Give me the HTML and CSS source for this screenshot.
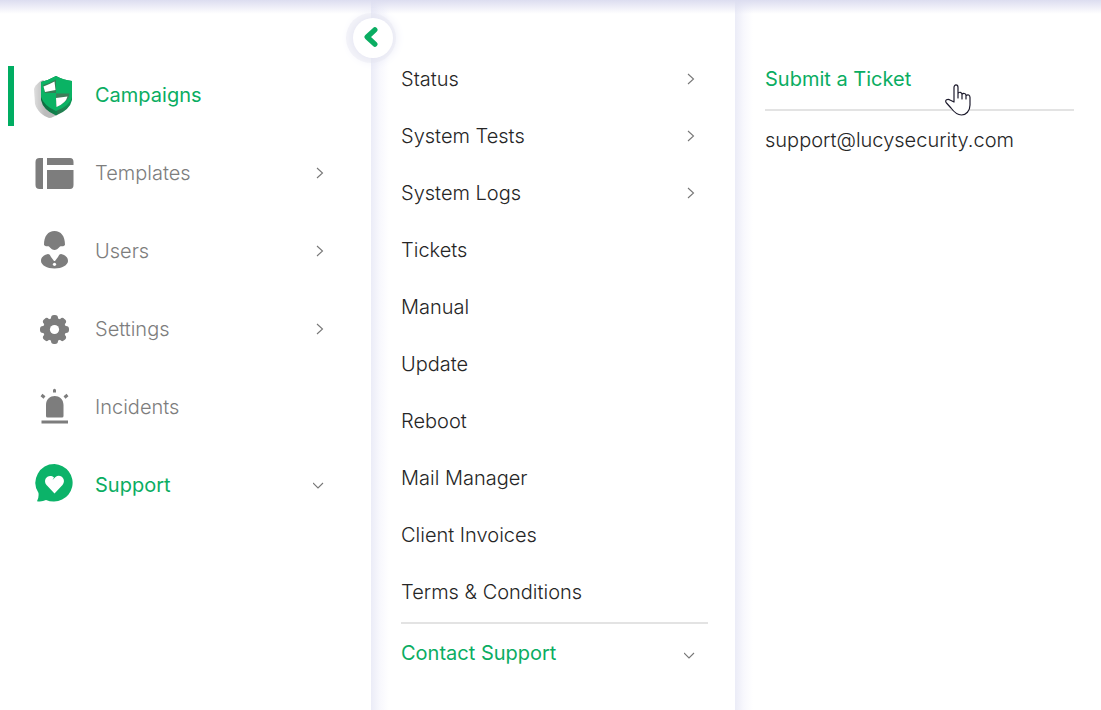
FILE: index.html
```html
<!DOCTYPE html>
<html lang="en">
<head>
<meta charset="utf-8">
<title>Support</title>
<link rel="stylesheet" href="styles.css">
</head>
<body>
<svg class="defs" aria-hidden="true">
  <symbol id="right" viewBox="0 0 12 12"><path d="M4 1 9.500 6 4 11" fill="none" stroke="#777" stroke-width="1.100"/></symbol>
  <symbol id="down" viewBox="0 0 12 12"><path d="M0 4 5 9 10 4" fill="none" stroke="#777" stroke-width="1.100"/></symbol>
</svg>
<main class="layout">
  <nav class="sidebar" aria-label="Main">
    <a class="main-item current" href="#">
      <svg class="icon" viewBox="0 -1 40 48">
        <defs>
          <linearGradient id="side" x1="0" x2="1"><stop offset="0" stop-color="#0d6c40"/><stop offset=".5" stop-color="#11824c"/><stop offset=".55" stop-color="#2c7750"/><stop offset="1" stop-color="#0a9653"/></linearGradient>
          <linearGradient id="shade" x1="0" x2="1"><stop offset="0" stop-color="#bdbdbd" stop-opacity=".5"/><stop offset=".4" stop-color="#bbb"/></linearGradient>
          <filter id="soft" x="-20%" y="-20%" width="140%" height="140%"><feGaussianBlur stdDeviation=".7"/></filter>
        </defs>
        <path d="M9 8 C4 10 1 14 0 17 L1 32 C3 39 9 44 15 46 Q19 46 27 40 L27 20Z" fill="url(#shade)" filter="url(#soft)"/>
        <path d="M22 4 Q29 8 38 9 V28 Q36 38 22 43.500 Q9 38 7 28 V10 Q15 8 22 4Z" fill="url(#side)"/>
        <path d="M22 4 Q29 8 38 9 V25 Q36 34 22 39 Q10 34 7 25 V10 Q15 8 22 4Z" fill="#0ab364"/>
        <path d="M9 13 Q16 11 22 7.500 V21 H11Z" fill="#347f55"/>
        <path d="M9.500 14.500 Q16 12 20.500 9.500 L21.500 18 L11 20Z" fill="#fff"/>
        <path d="M22 21.500 H35.500 Q35 30 22 35Z" fill="#3e7d59"/>
        <path d="M22 26 L33.500 24.500 Q32 31 22.500 35Z" fill="#fff"/>
      </svg>
      <span class="label">Campaigns</span>
    </a>
    <a class="main-item" href="#">
      <svg class="icon" viewBox="0 -1 40 48" fill="#7d7d7d"><path d="M5.500 8H9V39H5.500Q1.500 39 1.500 35V12Q1.500 8 5.500 8ZM13 8H36Q39.500 8 39.500 12V15H13ZM13 20H39.500V35Q39.500 39 36 39H13Z"/></svg>
      <span class="label">Templates</span><svg class="chevron"><use href="#right"/></svg>
    </a>
    <a class="main-item" href="#">
      <svg class="icon" viewBox="0 0 40 48" fill="#7d7d7d"><path d="M20.500 4C14 4 10 9 10 18C12 20 14 19 15 19.500C17 22 19 23 20.500 23S24 22 26 19.500C28 19 29 20 31 18C31 9 27 4 20.500 4Z"/><path d="M14 27C10 28 7 30 7 34C7 38 13 41.500 20.500 41.500S34 38 34 34C34 30 31 28 27 27Q25 27 24 30L21 34H20L17 30Q16 27 14 27Z"/><circle cx="20.500" cy="37.300" r="1.600" fill="#fff"/></svg>
      <span class="label">Users</span><svg class="chevron"><use href="#right"/></svg>
    </a>
    <a class="main-item" href="#">
      <svg class="icon" viewBox="0 -1 40 48">
        <g fill="#7d7d7d"><circle cx="20.500" cy="23.500" r="11.500"/><g id="teeth"><rect x="17" y="9" width="7" height="29" rx="3"/><rect x="6" y="20" width="29" height="7" rx="3"/></g><use href="#teeth" transform="rotate(45 20.500 23.500)"/></g><circle cx="20.500" cy="23.500" r="4.600" fill="#fff"/>
      </svg>
      <span class="label">Settings</span><svg class="chevron"><use href="#right"/></svg>
    </a>
    <a class="main-item" href="#">
      <svg class="icon" viewBox="0 1 40 48" fill="#7d7d7d"><path d="M12 34V23C12 11 29.500 11 29.500 23V34Q29.500 35.500 28 35.500H13.500Q12 35.500 12 34ZM7.500 38.500H34V41.500H7.500ZM19 10V8Q20.500 5.500 22 8V10.500H19Z"/><path d="M7.500 13 10.500 15.500M33.500 13 30.500 15.500" stroke="#7d7d7d" stroke-width="3"/></svg>
      <span class="label">Incidents</span>
    </a>
    <a class="main-item active" href="#">
      <svg class="icon" viewBox="0 1 40 48"><path d="M20.500 4A19 18.800 0 1 1 12 40Q8 42 3 41.200Q5 38 4.500 33A19 18.800 0 0 1 20.500 4Z" fill="#0cb369"/><path d="M20.500 33.500 12.500 25C8 19 15 13 20 17.500L18.500 20L21.500 17C26 13 33 19 28.500 25Z" fill="#fff"/></svg>
      <span class="label">Support</span><svg class="chevron"><use href="#down"/></svg>
    </a>
  </nav>
  <nav class="panel" aria-label="Support">
    <button class="collapse" type="button" aria-label="Collapse"><svg class="collapse-icon" viewBox="0 0 16 20"><path d="M11.500 3.500 4.500 10 11.500 16.500" fill="none" stroke="#0aad62" stroke-width="4.800" stroke-linecap="round" stroke-linejoin="round"/></svg></button>
    <a class="item" href="#">Status<svg class="chevron"><use href="#right"/></svg></a>
    <a class="item" href="#">System Tests<svg class="chevron"><use href="#right"/></svg></a>
    <a class="item" href="#">System Logs<svg class="chevron"><use href="#right"/></svg></a>
    <a class="item" href="#">Tickets</a>
    <a class="item" href="#">Manual</a>
    <a class="item" href="#">Update</a>
    <a class="item" href="#">Reboot</a>
    <a class="item" href="#">Mail Manager</a>
    <a class="item" href="#">Client Invoices</a>
    <a class="item" href="#">Terms &amp; Conditions</a>
    <a class="item contact" href="#">Contact Support<svg class="chevron"><use href="#down"/></svg></a>
  </nav>
  <nav class="panel" aria-label="Contact Support">
    <a class="item ticket" href="#">Submit a Ticket</a>
    <a class="item email" href="#">support@lucysecurity.com</a>
    <svg class="pointer" viewBox="0 0 26 34" aria-hidden="true"><path d="M9 19V4.500C9 1 13 1 13 4.500V15V10.500C14 8.500 17 9 17 11.500V16V11.500C18 10 21 10 21 12.500V16V12.500C23 11 25 12 25 14.500V22C25 28 21 32 16.500 32C12 32 9 29 6 25L1.500 20C-1 17 3 15.500 5 17Z" fill="#fff" stroke="#1c1a2c" stroke-width="1.200" stroke-linejoin="round"/></svg>
  </nav>
</main>
</body>
</html>
```
FILE: styles.css
```css
* { box-sizing: border-box; }
body {
  margin: 0;
  background: #fff;
  color: #262626;
  font: 300 20px/28px Inter, "Liberation Sans", sans-serif;
}
.defs { position: absolute; width: 0; height: 0; }
.layout {
  display: grid;
  grid-template-columns: 371fr 364fr 366fr;
  min-height: 100vh;
}
a { color: inherit; text-decoration: none; }
.sidebar {
  display: flex;
  flex-direction: column;
  gap: 18px;
  padding: 66px 46px 24px 8px;
  background: linear-gradient(#dcddf0, #fff 14px);
}
.main-item {
  display: flex;
  align-items: center;
  height: 60px;
  padding: 0 0 2px 20px;
  border-left: 6px solid transparent;
  color: #7d7d7d;
}
.current { border-color: #00ad62; }
.current, .active, .contact, .ticket { color: #0aad62; font-weight: 400; }
.icon { flex: none; width: 40px; height: 48px; margin-right: 21px; }
.chevron { flex: none; width: 12px; height: 12px; margin-left: auto; }
.panel {
  position: relative;
  padding: 51px 27px 24px 30px;
  background:
    linear-gradient(#dcddf0, #fff0 14px),
    linear-gradient(90deg, #ebecf7, #f8f8fd 9px, #fff 18px);
}
.item {
  display: flex;
  align-items: center;
  height: 57px;
  padding: 0 12px 2px 0;
}
.contact { height: 60px; margin-top: 1px; padding-bottom: 0; border-top: 2px solid #e3e3e3; }
.contact .chevron { margin-top: 4px; }
.ticket { height: 60px; border-bottom: 2px solid #e3e3e3; }
.email { padding-bottom: 0; }
.collapse {
  position: absolute;
  top: 18px;
  left: -18px;
  display: grid;
  place-items: center;
  width: 40px;
  height: 40px;
  padding: 0 4px 2px 0;
  border: 0;
  border-radius: 50%;
  background: #fff;
  box-shadow: -2px 0 0 5px #e6e7f066, 0 0 12px 1px #dfe1f3;
}
.collapse-icon { width: 18px; height: 22px; }
.pointer { position: absolute; top: 83px; left: 210px; width: 26px; height: 34px; }
```
